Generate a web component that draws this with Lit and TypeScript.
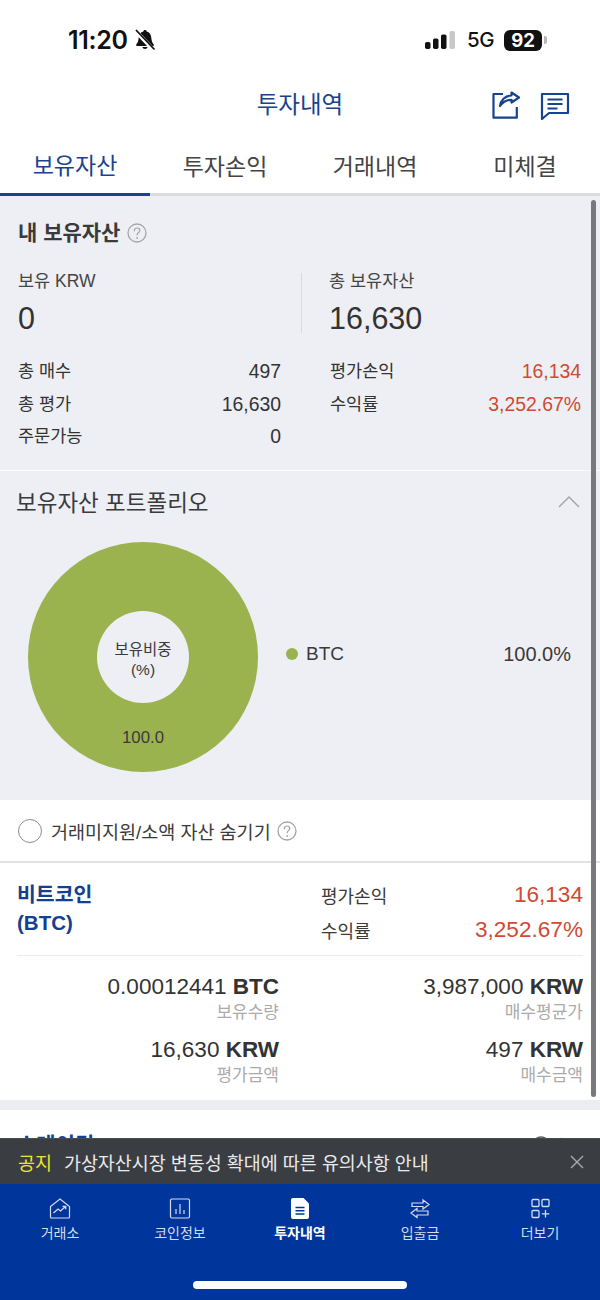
import { LitElement, html, css, svg } from "lit";
import { customElement } from "lit/decorators.js";

const help = html`<svg class="help" viewBox="0 0 20 20" width="20" height="20" fill="none">
  <circle cx="10" cy="10" r="9" stroke="#a3a5a9" stroke-width="1.3"/>
  <path d="M7.3 7.8c0-1.7 1.2-2.8 2.8-2.8s2.7 1 2.7 2.4c0 1.2-.7 1.8-1.5 2.4-.8.6-1.2 1.1-1.2 2.2" stroke="#a3a5a9" stroke-width="1.2" stroke-linecap="round"/>
  <circle cx="10.1" cy="15" r=".9" fill="#a3a5a9"/></svg>`;

const navIcons = [
  svg`<path d="M1.500 8.500 11 1l9.500 7.500V19a1 1 0 0 1-1 1h-17a1 1 0 0 1-1-1z" stroke-width="1.200"/><path d="M4.500 15l4.500-4 2.500 2 5-4.500M13.500 8.300h3.200v3" stroke-width="1.300"/>`,
  svg`<rect x="1.500" y="1" width="19" height="19" rx="1.500" stroke-width="1.200"/><path d="M7 11v5M11 6v10M15 12v4" stroke-width="1.200"/>`,
  svg`<path d="M4 0h10.500L20 5.500V19a2 2 0 0 1-2 2H4a2 2 0 0 1-2-2V2a2 2 0 0 1 2-2z" fill="#fff" stroke="none"/><path d="M6.500 9.500h9M6.500 12.800h9M6.500 16h9" stroke="#00359b" stroke-width="1.500"/>`,
  svg`<path d="M3 5h11V2l6 4.500L14 11V8.500H3zM19 13H8v-2.500l-6 4.500 6 4.500V17h11z" stroke-width="1.200"/>`,
  svg`<rect x="3" y="1.500" width="7" height="7" rx="1" stroke-width="1.300"/><rect x="13" y="1.500" width="7" height="7" rx="1" stroke-width="1.300"/><rect x="3" y="12.500" width="7" height="7" rx="1" stroke-width="1.300"/><path d="M16.500 12v7.500M12.800 15.800h7.500" stroke-width="1.300"/>`,
];

@customElement("app-root")
export class AppRoot extends LitElement {
  static styles = css`
    :host {
      display: flex; flex-direction: column; position: relative;
      width: 600px; height: 1300px; overflow: hidden; background: #fff; color: #333;
      font-family: "Liberation Sans", "Noto Sans CJK KR", sans-serif;
    }
    .status { height: 80px; flex: none; display: flex; align-items: center; justify-content: space-between; padding: 0 53px 0 68px; box-sizing: border-box; }
    .status-left { display: flex; align-items: center; gap: 6px; }
    .time { font: 600 25px/1 Inter, "Liberation Sans", sans-serif; color: #111; letter-spacing: -.3px; }
    .status-right { display: flex; align-items: center; }
    .signal { margin-right: 12px; }
    .net { font: 500 20.500px/1 Inter, "Liberation Sans", sans-serif; color: #111; margin-right: 10px; letter-spacing: -.5px; }
    .batt { display: flex; align-items: center; gap: 2px; }
    .batt-body { width: 38px; height: 21px; border-radius: 6px; background: #111; color: #fff; font: 700 18.500px/21px Inter, "Liberation Sans", sans-serif; text-align: center; }
    .batt-tip { width: 3px; height: 8px; border-radius: 0 2px 2px 0; background: #b9b9b9; }

    .header { height: 50px; flex: none; position: relative; display: flex; align-items: center; justify-content: center; padding-bottom: 4px; box-sizing: border-box; }
    .title { font-size: 23.500px; color: #17438f; }
    .header-icons { position: absolute; right: 30px; top: 10px; display: flex; gap: 19px; }

    .tabs { height: 66px; flex: none; display: grid; grid-template-columns: repeat(4, 1fr); box-sizing: border-box; border-bottom: 3px solid #dcdcde; }
    .tab { display: flex; align-items: center; justify-content: center; font-size: 23px; color: #444; height: 66px; box-sizing: border-box; padding: 12px 0 8px; }
    .tab.on { color: #17438f; border-bottom: 3px solid #17438f; }

    .scroll { flex: 1; min-height: 0; overflow: hidden; }
    .gray { background: #edeff4; }
    .summary { height: 275px; padding: 23px 19px 0 18px; box-sizing: border-box; border-bottom: 1px solid #fbfbfd; }
    .sum-title { display: flex; align-items: center; gap: 7px; font-size: 21px; font-weight: 700; line-height: 28px; color: #3a3a3a; }
    .metrics { display: grid; grid-template-columns: 283px 1fr; margin-top: 23px; height: 85px; }
    .metric { display: flex; flex-direction: column; gap: 8px; }
    .metric + .metric { border-left: 1.500px solid #d8d9dc; padding-left: 27px; margin-top: 3px; height: 60px; }
    .metric + .metric .m-label { margin-top: -3px; }
    .m-label { font-size: 17.500px; line-height: 22px; color: #444; }
    .m-value { font-size: 30.500px; line-height: 36px; color: #333; }
    .rows { display: grid; grid-template-columns: 263px 251px; column-gap: 49px; }
    .row { display: flex; justify-content: space-between; align-items: center; font-size: 17.500px; line-height: 32.500px; height: 32.500px; color: #333; }
    .num { font-size: 19.400px; }
    .red { color: #d04a33; }

    .port-head { height: 62px; display: flex; align-items: center; justify-content: space-between; padding: 0 20px 2px 16px; box-sizing: border-box; font-size: 22.500px; color: #3a3a3a; }
    .port-body { display: flex; align-items: flex-start; height: 267px; padding: 9px 29px 0 28px; box-sizing: border-box; }
    .donut { position: relative; width: 230px; height: 230px; flex: none; border-radius: 50%; background: #9ab34f; display: flex; align-items: center; justify-content: center; }
    .hole { width: 92px; height: 92px; border-radius: 50%; background: #edeff4; display: flex; align-items: center; justify-content: center; text-align: center; font-size: 15.500px; line-height: 20px; color: #3a3a3a; padding-top: 5px; box-sizing: border-box; }
    .pct { position: absolute; left: 0; right: 0; bottom: 24px; text-align: center; font-size: 16.800px; color: #3a3a3a; line-height: 20px; }
    .legend { flex: 1; display: flex; align-items: center; height: 24px; margin: 100px 0 0 28px; font-size: 19px; color: #3a3a3a; }
    .dot { width: 12px; height: 12px; border-radius: 50%; background: #9ab34f; margin-right: 8px; }
    .legend .val { margin-left: auto; font-size: 20px; }

    .check { height: 63px; box-sizing: border-box; border-bottom: 2px solid #e2e2e4; display: flex; align-items: center; padding: 0 0 0 18px; font-size: 18.500px; color: #3a3a3a; }
    .radio { width: 22px; height: 22px; border-radius: 50%; border: 1.500px solid #8d8d8d; margin-right: 9px; }
    .check .help { margin-left: 6px; }

    .asset { height: 237px; padding: 0 17px; box-sizing: border-box; }
    .asset-top { height: 93px; border-bottom: 1.500px solid #ebebed; display: grid; grid-template-columns: 304px 1fr; padding-top: 16px; box-sizing: border-box; }
    .name { font-size: 20.500px; font-weight: 700; line-height: 28px; color: #15408f; padding-top: 2px; }
    .pl { display: grid; grid-template-columns: 1fr auto; align-items: center; font-size: 18px; color: #3a3a3a; grid-auto-rows: 35px; margin-top: -2px; height: 70px; }
    .pl b { font-weight: 400; font-size: 22.600px; text-align: right; }
    .hold { display: grid; grid-template-columns: 262px 1fr; column-gap: 42px; padding-top: 18px; row-gap: 11px; }
    .cell { text-align: right; }
    .big { font-size: 22.500px; line-height: 25px; color: #333; }
    .big b { font-weight: 700; }
    .small { font-size: 17px; line-height: 26px; color: #ababab; padding-top: 1px; }
    .band { height: 10px; background: #ebedf0; }
    .next { background: #fff; height: 60px; display: flex; justify-content: space-between; padding: 22px 30px 0 17px; box-sizing: border-box; }
    .n { font-size: 21px; line-height: 26px; font-weight: 700; color: #15408f; }
    .r { display: flex; align-items: center; height: 26px; gap: 9px; font-size: 19px; color: #555; margin-top: 1px; }
    .r .zero { color: #15408f; }

    .notice { height: 46px; flex: none; background: #3a3d42; display: flex; align-items: center; padding: 0 16px 0 18px; font-size: 18.450px; color: #e9eaeb; border-top: 1px solid #4a4c50; box-sizing: border-box; }
    .notice .tag { color: #ece534; margin-right: 12px; }
    .notice svg { margin-left: auto; }

    .nav { height: 116px; flex: none; background: #00359b; display: grid; grid-template-columns: repeat(5, 1fr); position: relative; }
    .item { display: flex; flex-direction: column; align-items: center; padding-top: 14px; color: #d5dcef; font-size: 14px; line-height: 20px; }
    .item svg { margin-bottom: 3px; }
    .item.on { color: #fff; font-weight: 700; }
    .home { position: absolute; left: 193px; bottom: 11px; width: 214px; height: 8px; border-radius: 4px; background: #fff; }
    .scrollbar { position: absolute; left: 591px; top: 200px; width: 4.500px; height: 897px; border-radius: 3px; background: #77797d; }
  `;

  private hold(v: string, u: string, l: string) {
    return html`<div class="cell"><div class="big">${v} <b>${u}</b></div><div class="small">${l}</div></div>`;
  }

  render() {
    const tabs = ["보유자산", "투자손익", "거래내역", "미체결"];
    const nav = ["거래소", "코인정보", "투자내역", "입출금", "더보기"];
    return html`
      <div class="status">
        <div class="status-left">
          <span class="time">11:20</span>
          <svg width="22" height="24" viewBox="0 0 22 24">
            <path d="M11 2c-1 0-1.600.7-1.700 1.600C6.400 4.300 5 6.600 4.700 9.800c-.3 3.200-.8 4.700-2.400 6.500V18h17.400v-1.700c-1.600-1.800-2.100-3.300-2.400-6.500-.3-3.200-1.700-5.500-4.600-6.200C12.600 2.700 12 2 11 2zM8.300 19a2.800 2.800 0 0 0 5.400 0z" fill="#111"/>
            <path d="M1.500 2.800l18 19" stroke="#fff" stroke-width="4"/><path d="M2 2l18.500 19.500" stroke="#111" stroke-width="1.800"/>
          </svg>
        </div>
        <div class="status-right">
          <svg class="signal" width="30" height="18" viewBox="0 0 30 18">
            <rect x="0" y="11" width="5.500" height="7" rx="1.800" fill="#111"/><rect x="8" y="7.500" width="5.500" height="10.500" rx="1.800" fill="#111"/>
            <rect x="16" y="3.500" width="5.500" height="14.500" rx="1.800" fill="#111"/><rect x="24.500" y="0" width="5.500" height="18" rx="1.800" fill="#c8c8c8"/>
          </svg>
          <span class="net">5G</span>
          <div class="batt"><div class="batt-body">92</div><div class="batt-tip"></div></div>
        </div>
      </div>

      <div class="header">
        <span class="title">투자내역</span>
        <div class="header-icons">
          <svg width="30" height="30" viewBox="0 0 30 30" fill="none" stroke="#17438f" stroke-width="2.200" stroke-linejoin="round">
            <path d="M12 4H2.500v23.700h23.300V17"/>
            <path d="M20.500 2.500 28 7.500l-7.500 5V9.800c-5 0-8.500 1.700-11.500 6.200.5-5.500 5-10.500 11.500-10.500z"/>
          </svg>
          <svg width="30" height="30" viewBox="0 0 30 30" fill="none" stroke="#17438f" stroke-width="2.200">
            <path d="M2 4h26v19H9l-7 6z" stroke-linejoin="round"/><path d="M7.500 9.500h15M7.500 14h15M7.500 18.500h10"/>
          </svg>
        </div>
      </div>

      <div class="tabs">
        ${tabs.map((t, i) => html`<div class="tab ${i === 0 ? "on" : ""}">${t}</div>`)}
      </div>

      <div class="scroll">
        <div class="gray">
          <div class="summary">
            <div class="sum-title">내 보유자산 ${help}</div>
            <div class="metrics">
              <div class="metric"><div class="m-label">보유 KRW</div><div class="m-value">0</div></div>
              <div class="metric"><div class="m-label">총 보유자산</div><div class="m-value">16,630</div></div>
            </div>
            <div class="rows">
              <div class="row"><span>총 매수</span><span class="num">497</span></div>
              <div class="row"><span>평가손익</span><span class="num red">16,134</span></div>
              <div class="row"><span>총 평가</span><span class="num">16,630</span></div>
              <div class="row"><span>수익률</span><span class="num red">3,252.67%</span></div>
              <div class="row"><span>주문가능</span><span class="num">0</span></div>
            </div>
          </div>
          <div class="port-head">
            <span>보유자산 포트폴리오</span>
            <svg width="22" height="13" viewBox="0 0 22 13" fill="none" stroke="#a5a7ab" stroke-width="1.500"><path d="M1 12 11 2l10 10"/></svg>
          </div>
          <div class="port-body">
            <div class="donut">
              <div class="hole"><span>보유비중<br />(%)</span></div>
              <div class="pct">100.0</div>
            </div>
            <div class="legend"><span class="dot"></span><span>BTC</span><span class="val">100.0%</span></div>
          </div>
        </div>

        <div class="check"><span class="radio"></span>거래미지원/소액 자산 숨기기 ${help}</div>

        <div class="asset">
          <div class="asset-top">
            <div class="name">비트코인<br />(BTC)</div>
            <div class="pl">
              <span>평가손익</span><b class="red">16,134</b>
              <span>수익률</span><b class="red">3,252.67%</b>
            </div>
          </div>
          <div class="hold">
            ${this.hold("0.00012441", "BTC", "보유수량")}
            ${this.hold("3,987,000", "KRW", "매수평균가")}
            ${this.hold("16,630", "KRW", "평가금액")}
            ${this.hold("497", "KRW", "매수금액")}
          </div>
        </div>
        <div class="band"></div>
        <div class="next">
          <span class="n">스테이킹</span>
          <span class="r"><span><span class="zero">0</span> KRW 보유중</span>
            <svg width="20" height="20" viewBox="0 0 20 20" fill="none" stroke="#555" stroke-width="1.300"><circle cx="10" cy="10" r="9"/></svg>
            <svg width="10" height="18" viewBox="0 0 10 18" fill="none" stroke="#888" stroke-width="1.500"><path d="M1 1l8 8-8 8"/></svg>
          </span>
        </div>
      </div>

      <div class="notice">
        <span class="tag">공지</span><span>가상자산시장 변동성 확대에 따른 유의사항 안내</span>
        <svg width="14" height="14" viewBox="0 0 14 14" stroke="#a9abae" stroke-width="1.400"><path d="M1 1l12 12M13 1 1 13"/></svg>
      </div>

      <div class="nav">
        ${nav.map((t, i) => html`<div class="item ${i === 2 ? "on" : ""}">
          <svg width="22" height="22" viewBox="0 0 22 22" fill="none" stroke="#d5dcef">${navIcons[i]}</svg>${t}
        </div>`)}
        <div class="home"></div>
      </div>
      <div class="scrollbar"></div>
    `;
  }
}
